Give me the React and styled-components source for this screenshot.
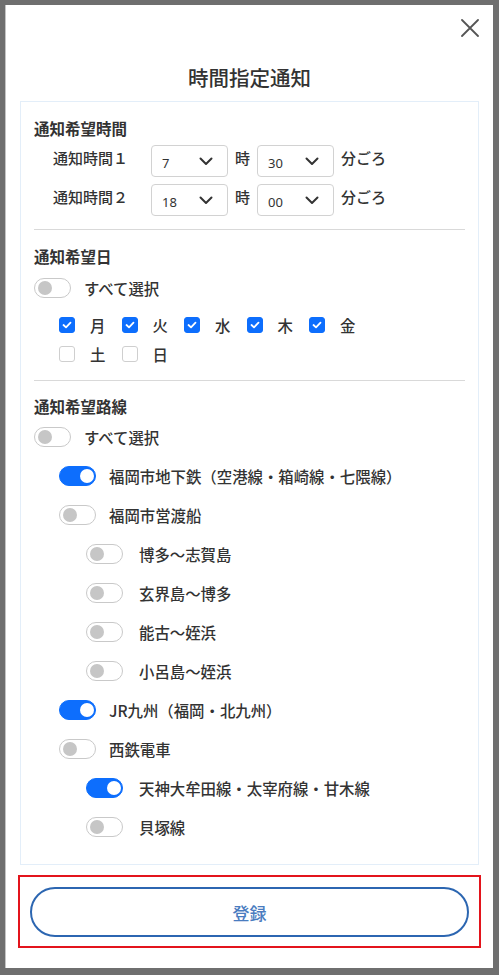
import React from "react";
import styled, { createGlobalStyle } from "styled-components";

const GlobalStyle = createGlobalStyle`
  html, body { margin: 0; padding: 0; }
  body {
    background: #6f6f6f;
    font-family: "Noto Sans CJK JP", "Noto Sans", sans-serif;
    color: #333;
  }
  * { box-sizing: border-box; }
`;

const Page = styled.div`
  padding: 5px 6px 7px 5px;
  height: 975px;
`;

const Modal = styled.div`
  width: 488px;
  height: 963px;
  background: #fff;
  border-left: 1px solid #c4c4c4;
  display: flex;
  flex-direction: column;
  padding: 0 14px 0 14px;
`;

const CloseRow = styled.div`
  display: flex;
  justify-content: flex-end;
  padding-top: 14px;
`;

const CloseButton = styled.button`
  width: 18px;
  height: 18px;
  padding: 0;
  border: 0;
  background: none;
  display: block;
  svg { display: block; }
`;

const Title = styled.h1`
  margin: 25px 0 9px;
  font-size: 20.5px;
  line-height: 30px;
  font-weight: 500;
  text-align: center;
  color: #333;
`;

const Card = styled.div`
  border: 1px solid #e3eef9;
  padding: 15px 13px 27px 13px;
  display: flex;
  flex-direction: column;
`;

const Heading = styled.div`
  font-size: 15.5px;
  line-height: 22px;
  font-weight: 700;
  color: #333;
  margin-top: ${(p) => p.$mt || 0}px;
`;

const TimeRows = styled.div`
  display: flex;
  flex-direction: column;
  gap: 7px;
  margin-top: 6px;
  padding-left: 19px;
`;

const TimeRow = styled.div`
  display: flex;
  align-items: flex-start;
  height: 32px;
`;

const Text = styled.span`
  font-size: 15px;
  font-weight: 500;
  line-height: 26px;
  color: #333;
  white-space: nowrap;
  width: ${(p) => (p.$w ? `${p.$w}px` : "auto")};
  margin-right: ${(p) => p.$mr || 0}px;
`;

const SelectBox = styled.div`
  width: 77px;
  height: 32px;
  border: 1px solid #d2d2d2;
  border-radius: 4px;
  display: flex;
  align-items: flex-start;
  justify-content: space-between;
  padding: 0 14px 0 10px;
  margin-right: 7px;
  font-family: "Noto Sans", sans-serif;
  font-size: 13px;
  color: #333;
  span { line-height: 35px; }
  svg { margin-top: 11px; }
`;

const Divider = styled.div`
  height: 1px;
  background: #d9d9d9;
  margin-top: ${(p) => p.$mt}px;
`;

const ToggleRow = styled.div`
  display: flex;
  align-items: center;
  height: 20px;
  padding-left: ${(p) => p.$indent || 0}px;
  margin-top: ${(p) => p.$mt}px;
`;

const Track = styled.span`
  position: relative;
  width: 37px;
  height: 20px;
  border-radius: 10px;
  flex-shrink: 0;
  background: ${(p) => (p.$on ? "#0d6efd" : "#fff")};
  border: 1px solid ${(p) => (p.$on ? "#0d6efd" : "#c9c9c9")};
  margin-right: ${(p) => p.$gap}px;
  &::after {
    content: "";
    position: absolute;
    top: 2px;
    left: ${(p) => (p.$on ? "20px" : "3px")};
    width: 14px;
    height: 14px;
    border-radius: 50%;
    background: ${(p) => (p.$on ? "#fff" : "#c6c6c6")};
  }
`;

const RowLabel = styled.span`
  font-size: 15.4px;
  font-weight: 500;
  line-height: 20px;
  color: #333;
  white-space: nowrap;
`;

const CheckRow = styled.div`
  display: flex;
  align-items: center;
  height: 16px;
  padding-left: 25px;
  margin-top: ${(p) => p.$mt}px;
`;

const CheckItem = styled.label`
  display: flex;
  align-items: center;
  width: 62.5px;
`;

const Box = styled.span`
  width: 16px;
  height: 16px;
  border-radius: 3px;
  flex-shrink: 0;
  background: ${(p) => (p.$on ? "#0d6efd" : "#fff")};
  border: 1px solid ${(p) => (p.$on ? "#0d6efd" : "#cfcfcf")};
  display: flex;
  align-items: center;
  justify-content: center;
  margin-right: 15px;
`;

const Annotation = styled.div`
  margin: 10px -2px 0;
  border: 2px solid #e3141c;
  padding: 10px 10px 9px;
`;

const SubmitButton = styled.button`
  width: 100%;
  height: 50px;
  border: 2px solid #2c66b1;
  border-radius: 25px;
  background: #fff;
  color: #4a7cc0;
  font-family: "Noto Sans CJK JP", sans-serif;
  font-size: 17px;
  font-weight: 500;
  padding: 0;
`;

const Chevron = () => (
  <svg width="14" height="9" viewBox="0 0 14 9">
    <path d="M1.5 1.5 L7 7 L12.5 1.5" fill="none" stroke="#333" strokeWidth="2" strokeLinecap="round" strokeLinejoin="round" />
  </svg>
);

const Check = () => (
  <svg width="10" height="8" viewBox="0 0 10 8">
    <path d="M1.5 4 L4 6.3 L8.5 1.6" fill="none" stroke="#fff" strokeWidth="1.8" strokeLinecap="round" strokeLinejoin="round" />
  </svg>
);

const Select = ({ value }) => (
  <SelectBox>
    <span>{value}</span>
    <Chevron />
  </SelectBox>
);

const Toggle = ({ on, label, indent, mt, gap = 13 }) => (
  <ToggleRow $indent={indent} $mt={mt}>
    <Track $on={on} $gap={gap} />
    <RowLabel>{label}</RowLabel>
  </ToggleRow>
);

const Day = ({ on, label }) => (
  <CheckItem>
    <Box $on={on}>{on && <Check />}</Box>
    <RowLabel>{label}</RowLabel>
  </CheckItem>
);

const routes = [
  { label: "福岡市地下鉄（空港線・箱崎線・七隈線）", on: true, level: 1 },
  { label: "福岡市営渡船", on: false, level: 1 },
  { label: "博多～志賀島", on: false, level: 2 },
  { label: "玄界島～博多", on: false, level: 2 },
  { label: "能古～姪浜", on: false, level: 2 },
  { label: "小呂島～姪浜", on: false, level: 2 },
  { label: "JR九州（福岡・北九州）", on: true, level: 1 },
  { label: "西鉄電車", on: false, level: 1 },
  { label: "天神大牟田線・太宰府線・甘木線", on: true, level: 2 },
  { label: "貝塚線", on: false, level: 2 },
];

export default function App() {
  return (
    <>
      <GlobalStyle />
      <Page>
        <Modal>
          <CloseRow>
            <CloseButton aria-label="close">
              <svg width="18" height="18" viewBox="0 0 18 18">
                <path d="M1 1 L17 17 M17 1 L1 17" stroke="#555" strokeWidth="1.8" strokeLinecap="round" />
              </svg>
            </CloseButton>
          </CloseRow>
          <Title>時間指定通知</Title>
          <Card>
            <Heading>通知希望時間</Heading>
            <TimeRows>
              <TimeRow>
                <Text $w={98}>通知時間１</Text>
                <Select value="7" />
                <Text $mr={7}>時</Text>
                <Select value="30" />
                <Text>分ごろ</Text>
              </TimeRow>
              <TimeRow>
                <Text $w={98}>通知時間２</Text>
                <Select value="18" />
                <Text $mr={7}>時</Text>
                <Select value="00" />
                <Text>分ごろ</Text>
              </TimeRow>
            </TimeRows>
            <Divider $mt={13} />

            <Heading $mt={15}>通知希望日</Heading>
            <Toggle label="すべて選択" mt={11} />
            <CheckRow $mt={19}>
              <Day on label="月" />
              <Day on label="火" />
              <Day on label="水" />
              <Day on label="木" />
              <Day on label="金" />
            </CheckRow>
            <CheckRow $mt={13}>
              <Day label="土" />
              <Day label="日" />
            </CheckRow>
            <Divider $mt={18} />

            <Heading $mt={14}>通知希望路線</Heading>
            <Toggle label="すべて選択" mt={10} />
            {routes.map((r) => (
              <Toggle
                key={r.label}
                label={r.label}
                on={r.on}
                indent={r.level === 1 ? 25 : 52}
                gap={r.level === 1 ? 13 : 16}
                mt={19}
              />
            ))}
          </Card>
          <Annotation>
            <SubmitButton>登録</SubmitButton>
          </Annotation>
        </Modal>
      </Page>
    </>
  );
}
